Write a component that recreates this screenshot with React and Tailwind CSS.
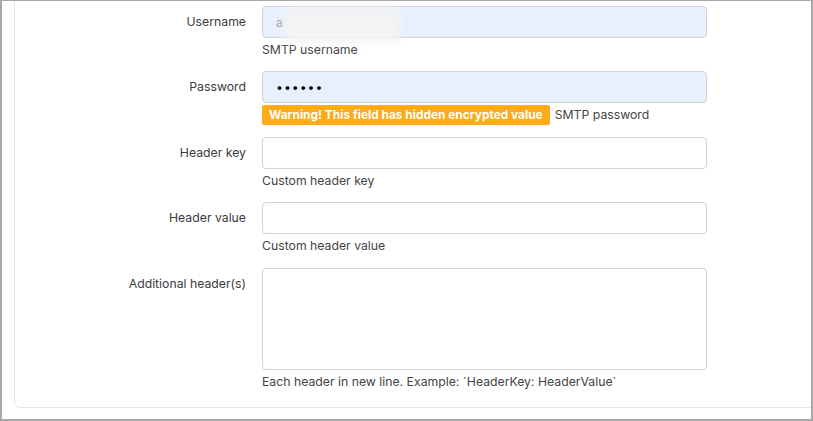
import React from 'react';

const Field = ({ label, help, children, gap = 'mb-[11px]' }) => (
  <div className={`grid grid-cols-[231px_445px] gap-x-[16px] ${gap}`}>
    <div className="text-right pt-[6px] leading-[20px] text-[12.25px] text-[#3b3b3b]">{label}</div>
    <div>
      {children}
      {help}
    </div>
  </div>
);

const Help = ({ children, className = 'mt-[2px]' }) => (
  <div className={`leading-[20px] h-[20px] text-[12.25px] text-[#444] ${className}`}>{children}</div>
);

const inputCls = 'w-full h-[32px] rounded-[4px] border border-[#ced4da] px-[13px] text-[12.25px] outline-none';

export default function App() {
  return (
    <div className="w-[813px] h-[421px] bg-white border-t border-l-2 border-r-2 border-b-2 border-[#a8a8a8] overflow-hidden font-['Inter','Noto_Sans',sans-serif]">
      <div className="ml-[12px] -mt-[20px] -mr-[20px] border border-[#e7e7e7] rounded-[6px] pt-[24px] pb-[15px]">
        <Field label="Username" help={<Help>SMTP username</Help>}>
          <div className="relative">
            <input className={`${inputCls} bg-[#e8f0fe] text-[#9a9a9a]`} defaultValue="a" readOnly />
            <div className="absolute left-[22px] top-[2px] w-[116px] h-[34px] bg-[#f3f3f3] blur-[4px] pointer-events-none" />
          </div>
        </Field>

        <Field
          label="Password"
          gap="mb-[12px]"
          help={
            <div className="mt-[2px] h-[20px] flex items-center gap-[5px] text-[12.25px]">
              <span className="h-[20px] leading-[20px] px-[7px] rounded-[2px] bg-[#fdab17] text-white font-bold text-[11.9px]">
                Warning! This field has hidden encrypted value
              </span>
              <span className="text-[#444]">SMTP password</span>
            </div>
          }
        >
          <input type="password" className={`${inputCls} bg-[#e8f0fe] text-black tracking-[1px]`} defaultValue="secret" readOnly />
        </Field>

        <Field label="Header key" help={<Help>Custom header key</Help>}>
          <input className={`${inputCls} bg-white`} />
        </Field>

        <Field label="Header value" gap="mb-[12px]" help={<Help>Custom header value</Help>}>
          <input className={`${inputCls} bg-white`} />
        </Field>

        <Field
          label="Additional header(s)"
          gap=""
          help={<Help className="mt-[2px]">Each header in new line. Example: `HeaderKey: HeaderValue`</Help>}
        >
          <textarea className="block w-full h-[102px] rounded-[4px] border border-[#ced4da] bg-white px-[13px] py-[6px] text-[12.25px] outline-none resize-none" />
        </Field>
      </div>
    </div>
  );
}
